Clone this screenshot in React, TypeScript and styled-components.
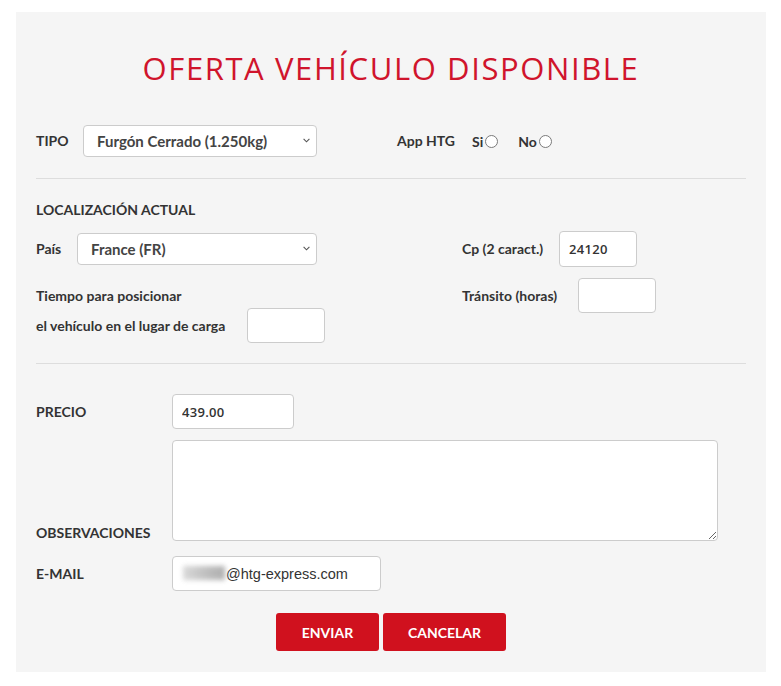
import React from 'react'
import styled, { createGlobalStyle } from 'styled-components'

const GlobalStyle = createGlobalStyle`
body {
  margin: 0;
  background: #ffffff;
  font-family: Lato, "Open Sans", sans-serif;
  color: #333333;
}
`

const Panel = styled.div`
width: 710px;
margin: 12px 0 0 16px;
padding: 38px 20px 21px 20px;
background: #f5f5f5;
`
const Title = styled.h1`
margin: 0;
text-align: center;
font-family: "Open Sans", sans-serif;
font-weight: 400;
font-size: 31px;
line-height: 36px;
letter-spacing: 1.6px;
color: #d0142c;
`
const Row = styled.div<{ $top?: number }>`
display: flex;
align-items: center;
margin-top: ${p => p.$top ?? 0}px;
`
const Label = styled.label<{ $width?: number }>`
display: inline-block;
width: ${p => (p.$width ? `${p.$width}px` : 'auto')};
font-weight: 700;
font-size: 14px;
line-height: 20px;
color: #333333;
white-space: nowrap;
`
const SelectWrap = styled.div<{ $width: number }>`
position: relative;
width: ${p => p.$width}px;
height: 32px;
`
const Select = styled.select`
appearance: none;
box-sizing: border-box;
width: 100%;
height: 100%;
padding: 0 24px 0 13px;
background: #ffffff;
border: 1px solid #cccccc;
border-radius: 4px;
font-family: Lato, sans-serif;
font-weight: 700;
font-size: 15px;
color: #444444;
`
const Chevron = styled.svg`
position: absolute;
right: 7px;
top: 13px;
width: 7px;
height: 5px;
pointer-events: none;
`
const AppGroup = styled.div`
display: flex;
align-items: center;
margin-left: 80px;
`
const Radio = styled.span`
display: inline-block;
flex: 0 0 auto;
box-sizing: border-box;
width: 13px;
height: 13px;
margin-left: 2px;
border: 1.4px solid #7a7a7a;
border-radius: 50%;
background: #ffffff;
`
const RadioLabel = styled.label<{ $gap: number }>`
display: flex;
align-items: center;
margin-left: ${p => p.$gap}px;
font-weight: 700;
font-size: 14px;
color: #333333;
cursor: pointer;
`
const HiddenRadio = styled.input`
position: absolute;
opacity: 0;
width: 0;
height: 0;
margin: 0;
`
const Divider = styled.hr<{ $top: number }>`
margin: ${p => p.$top}px 0 0 0;
border: 0;
border-top: 1px solid #dddddd;
`
const SectionTitle = styled.div`
margin-top: 21px;
font-weight: 700;
font-size: 14px;
line-height: 20px;
`
const LocationGrid = styled.div`
display: grid;
grid-template-columns: 426px 1fr;
row-gap: 11px;
margin-top: 11px;
`
const Cell = styled.div<{ $start?: boolean }>`
display: flex;
align-items: center;
align-self: ${p => (p.$start ? 'start' : 'center')};
`
const WaitCell = styled.div`
display: flex;
align-items: flex-end;
`
const WaitLabel = styled.div`
width: 211px;
padding: 3px 0 2px 0;
font-weight: 700;
font-size: 14px;
line-height: 30px;
`
const TextInput = styled.input<{ $width: number; $h?: number }>`
box-sizing: border-box;
width: ${p => p.$width}px;
height: ${p => p.$h ?? 35}px;
padding: 0 8px 0 9px;
background: #ffffff;
border: 1px solid #cccccc;
border-radius: 4px;
font-family: "Open Sans", sans-serif;
font-weight: 600;
font-size: 13px;
letter-spacing: 0.3px;
color: #333333;
`
const FieldRow = styled.div<{ $top: number; $align?: string }>`
display: grid;
grid-template-columns: 136px auto;
align-items: ${p => p.$align ?? 'center'};
justify-content: start;
margin-top: ${p => p.$top}px;
`
const FieldLabel = styled.label<{ $drop?: number }>`
font-weight: 700;
font-size: 14px;
line-height: 20px;
margin-bottom: ${p => p.$drop ?? 0}px;
`
const Notes = styled.textarea`
box-sizing: border-box;
width: 546px;
height: 101px;
background: #ffffff;
border: 1px solid #cccccc;
border-radius: 4px;
`
const EmailBox = styled.div`
position: relative;
width: 209px;
height: 35px;
`
const EmailInput = styled.input`
box-sizing: border-box;
width: 100%;
height: 100%;
padding: 0 0 0 53px;
background: #ffffff;
border: 1px solid #cccccc;
border-radius: 4px;
font-family: "Liberation Sans", Arial, sans-serif;
font-size: 14.5px;
color: #333333;
`
const Blurred = styled.span`
position: absolute;
left: 11px;
top: 10px;
width: 42px;
height: 14px;
background: linear-gradient(90deg, #d0d0d0, #b8b8b8 40%, #a8a8a8 70%, #9c9c9c);
filter: blur(2.5px);
opacity: 0.8;
`
const Buttons = styled.div`
display: flex;
justify-content: center;
gap: 4px;
margin-top: 22px;
`
const Button = styled.button<{ $width: number }>`
width: ${p => p.$width}px;
height: 38px;
border: 0;
border-radius: 3px;
background: #d0111e;
color: #ffffff;
font-family: Lato, sans-serif;
font-weight: 700;
font-size: 14px;
`

const Dropdown = ({ width, value, text }: { width: number; value: string; text: string }) => (
  <SelectWrap $width={width}>
    <Select defaultValue={value}>
      <option value={value}>{text}</option>
    </Select>
    <Chevron viewBox="0 0 7 5">
      <path d="M0.6 0.8 L3.5 3.8 L6.4 0.8" fill="none" stroke="#555" strokeWidth="1.1" />
    </Chevron>
  </SelectWrap>
)

const Choice = ({ text, gap }: { text: string; gap: number }) => (
  <RadioLabel $gap={gap}>
    {text}
    <HiddenRadio type="radio" name="app" />
    <Radio />
  </RadioLabel>
)

export default function App() {
  return (
    <>
      <GlobalStyle />
      <Panel>
        <Title>OFERTA VEHÍCULO DISPONIBLE</Title>

        <Row $top={39}>
          <Label $width={47}>TIPO</Label>
          <Dropdown width={234} value="furgon" text="Furgón Cerrado (1.250kg)" />
          <AppGroup>
            <Label>App HTG</Label>
            <Choice text="Si" gap={17} />
            <Choice text="No" gap={20} />
          </AppGroup>
        </Row>

        <Divider $top={21} />

        <SectionTitle>LOCALIZACIÓN ACTUAL</SectionTitle>
        <LocationGrid>
          <Cell>
            <Label $width={41}>País</Label>
            <Dropdown width={240} value="fr" text="France (FR)" />
          </Cell>
          <Cell>
            <Label $width={97}>Cp (2 caract.)</Label>
            <TextInput $width={78} $h={36} defaultValue="24120" />
          </Cell>
          <WaitCell>
            <WaitLabel>Tiempo para posicionar<br />el vehículo en el lugar de carga</WaitLabel>
            <TextInput $width={78} />
          </WaitCell>
          <Cell $start>
            <Label $width={116}>Tránsito (horas)</Label>
            <TextInput $width={78} />
          </Cell>
        </LocationGrid>

        <Divider $top={20} />

        <FieldRow $top={30}>
          <FieldLabel>PRECIO</FieldLabel>
          <TextInput $width={122} defaultValue="439.00" />
        </FieldRow>
        <FieldRow $top={11} $align="end">
          <FieldLabel $drop={-2}>OBSERVACIONES</FieldLabel>
          <Notes />
        </FieldRow>
        <FieldRow $top={15}>
          <FieldLabel>E-MAIL</FieldLabel>
          <EmailBox>
            <EmailInput defaultValue="@htg-express.com" />
            <Blurred />
          </EmailBox>
        </FieldRow>

        <Buttons>
          <Button $width={103}>ENVIAR</Button>
          <Button $width={123}>CANCELAR</Button>
        </Buttons>
      </Panel>
    </>
  )
}
